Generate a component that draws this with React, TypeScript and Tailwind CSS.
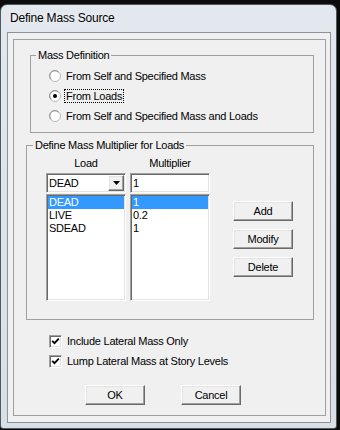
import React from "react";

const sunken =
  "border border-t-[#a0a0a0] border-l-[#a0a0a0] border-b-white border-r-white shadow-[inset_1px_1px_0_#696969,inset_-1px_-1px_0_#e3e3e3]";
const raised =
  "border border-t-white border-l-white border-b-[#696969] border-r-[#696969] shadow-[inset_-1px_-1px_0_#a0a0a0,inset_1px_1px_0_#e3e3e3]";

function Radio({ checked }: { checked?: boolean }) {
  return (
    <svg width="12" height="12" viewBox="0 0 12 12" className="shrink-0">
      <circle cx="6" cy="6" r="5.5" fill="#ffffff" stroke="#b8b8b8" />
      <path d="M2.2 9.3 A4.6 4.6 0 0 1 9.3 2.2" fill="none" stroke="#8a8a8a" strokeWidth="1" />
      {checked && <circle cx="6" cy="6" r="2" fill="#000" />}
    </svg>
  );
}

function Check() {
  return (
    <div className={`w-[13px] h-[13px] bg-white ${sunken} shrink-0 flex items-center justify-center`}>
      <svg width="9" height="9" viewBox="0 0 9 9">
        <path d="M1.2 3.8 L3.5 6.2 L7.8 1.6" fill="none" stroke="#000" strokeWidth="1.8" />
      </svg>
    </div>
  );
}

function Btn({ label, w = "w-[60px]" }: { label: string; w?: string }) {
  return (
    <div className={`${w} h-[20px] ${raised} bg-[#f0f0f0] flex items-center justify-center leading-[14px]`}>
      {label}
    </div>
  );
}

export default function App() {
  const loads = ["DEAD", "LIVE", "SDEAD"];
  const mults = ["1", "0.2", "1"];
  return (
    <div className="w-[340px] h-[430px] bg-[#0c0c0c] overflow-hidden font-['Liberation_Sans',Arial,sans-serif] text-[11px] tracking-[-0.25px] text-black">
      <div className="mt-[4px] w-[337px] h-[425px] rounded-t-[7px] rounded-b-[3px] border border-[#505860] bg-[linear-gradient(180deg,#e2e8ee_0%,#dde4eb_40%,#d8dfe7_100%)] flex flex-col">
        <div className="h-[27px] pl-[9px] pt-[6px] text-[12px] tracking-[-0.2px] leading-[14px] [text-shadow:0_0_6px_#ffffff]">
          Define Mass Source
        </div>
        <div className="ml-[6px] w-[324px] h-[391px] border border-[#8b949c] bg-[#f0f0f0] flex flex-col">
          <div className="mt-[6px] ml-[5px] w-[313px] h-[377px] border border-[#a0a0a0] flex flex-col">
            {/* Mass Definition */}
            <div className="relative ml-[16px] mt-[15px] w-[284px] h-[78px] border border-[#a0a0a0] shrink-0">
              <div className="absolute -top-[8px] left-[5px] px-[2px] bg-[#f0f0f0] leading-[14px]">Mass Definition</div>
              <div className="pt-[10px] pl-[18px] flex flex-col">
                <div className="h-[20px] flex items-center gap-[5px]">
                  <Radio />
                  <span>From Self and Specified Mass</span>
                </div>
                <div className="h-[20px] flex items-center gap-[4px]">
                  <Radio checked />
                  <span className="px-[1px] leading-[12px] outline outline-1 outline-dotted outline-black">From Loads</span>
                </div>
                <div className="h-[20px] flex items-center gap-[5px]">
                  <Radio />
                  <span>From Self and Specified Mass and Loads</span>
                </div>
              </div>
            </div>

            {/* Define Mass Multiplier */}
            <div className="relative ml-[12px] mt-[12px] w-[288px] h-[175px] border border-[#a0a0a0] shrink-0 flex">
              <div className="absolute -top-[8px] left-[6px] px-[2px] bg-[#f0f0f0] leading-[14px]">
                Define Mass Multiplier for Loads
              </div>
              <div className="ml-[19px] mt-[10px] flex flex-col">
                <div className="flex gap-[4px] h-[14px] leading-[14px]">
                  <div className="w-[80px] text-center">Load</div>
                  <div className="w-[80px] text-center">Multiplier</div>
                </div>
                <div className="mt-[3px] flex gap-[4px]">
                  <div className={`w-[80px] h-[20px] bg-white ${sunken} flex items-center justify-between pl-[2px] pr-[1px]`}>
                    <span className="leading-[14px]">DEAD</span>
                    <div className={`w-[16px] h-[16px] ${raised} bg-[#f0f0f0] flex items-center justify-center`}>
                      <svg width="7" height="4" viewBox="0 0 7 4">
                        <path d="M0 0 H7 L3.5 4 Z" fill="#000" />
                      </svg>
                    </div>
                  </div>
                  <div className={`w-[80px] h-[20px] bg-white ${sunken} flex items-center pl-[2px]`}>
                    <span className="leading-[14px]">1</span>
                  </div>
                </div>
                <div className="mt-[1px] flex gap-[4px]">
                  <div className={`w-[80px] h-[107px] bg-white ${sunken} pt-[1px] px-[1px] flex flex-col`}>
                    {loads.map((l, i) => (
                      <div
                        key={l}
                        className={`h-[13px] leading-[13px] pl-[1px] ${i === 0 ? "bg-[#3399ff] text-white" : ""}`}
                      >
                        {l}
                      </div>
                    ))}
                  </div>
                  <div className={`w-[80px] h-[107px] bg-white ${sunken} pt-[1px] px-[1px] flex flex-col`}>
                    {mults.map((m, i) => (
                      <div
                        key={i}
                        className={`h-[13px] leading-[13px] pl-[1px] ${i === 0 ? "bg-[#3399ff] text-white" : ""}`}
                      >
                        {m}
                      </div>
                    ))}
                  </div>
                </div>
              </div>
              <div className="ml-[23px] mt-[55px] flex flex-col gap-[8px]">
                <Btn label="Add" />
                <Btn label="Modify" />
                <Btn label="Delete" />
              </div>
            </div>

            {/* Checkboxes */}
            <div className="ml-[35px] mt-[11px] flex flex-col">
              <div className="h-[20px] flex items-center gap-[5px]">
                <Check />
                <span>Include Lateral Mass Only</span>
              </div>
              <div className="h-[20px] flex items-center gap-[5px]">
                <Check />
                <span>Lump Lateral Mass at Story Levels</span>
              </div>
            </div>

            {/* OK / Cancel */}
            <div className="ml-[71px] mt-[14px] flex gap-[36px]">
              <Btn label="OK" />
              <Btn label="Cancel" />
            </div>
          </div>
        </div>
      </div>
    </div>
  );
}
